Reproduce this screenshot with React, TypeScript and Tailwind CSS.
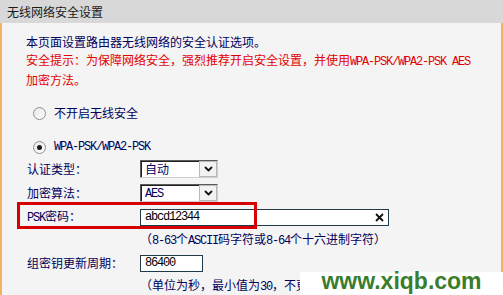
import type { ReactNode } from "react";

// Half-width latin in the router page's bitmap font: 6px advance
function M({ children }: { children: ReactNode }) {
  return <span className="font-['Liberation_Mono',monospace] tracking-[-1.2px]">{children}</span>;
}

function Radio({ checked }: { checked?: boolean }) {
  return (
    <span className="flex h-[13px] w-[13px] items-center justify-center rounded-full border border-[#8f8f8f] bg-gradient-to-br from-[#e6e6e6] to-white">
      {checked && <span className="h-[5px] w-[5px] rounded-full bg-[#1a1a1a]" />}
    </span>
  );
}

function Chevron() {
  return (
    <svg width="9" height="6" viewBox="0 0 9 6">
      <polyline points="1,1 4.5,4.5 8,1" fill="none" stroke="#111" strokeWidth="1.8" />
    </svg>
  );
}

function Select({ value }: { value: ReactNode }) {
  return (
    <div className="flex h-[18px] w-[78px] border border-t-[#5a5a5a] border-l-[#5a5a5a] border-b-[#cfcfcf] border-r-[#cfcfcf] bg-white">
      <div className="flex flex-1 items-center border-t border-l border-[#202020] pl-[3px] leading-none">{value}</div>
      <div className="flex w-[18px] items-center justify-center border border-[#b8b8b8] bg-[#f2f2f2]">
        <Chevron />
      </div>
    </div>
  );
}

function Row({ label, h, children }: { label?: ReactNode; h: string; children: ReactNode }) {
  return (
    <div className={`flex items-center ${h}`}>
      <div className="w-[114px] shrink-0 pl-[1px]">{label}</div>
      {children}
    </div>
  );
}

export default function App() {
  return (
    <div className="relative h-[295px] w-[503px] overflow-hidden bg-[#f4f4f4] font-['Noto_Sans_CJK_SC','Noto_Sans',sans-serif] text-[12px] text-[#00005c]">
      <div className="flex h-[23px] items-center bg-[#d8d8d8] pl-[7px] text-[#1a1a1a]">无线网络安全设置</div>

      <div className="h-[272px] border-x-2 border-[#f4b266] pl-[24px] pt-[10px]">
        <div className="leading-[18px]">
          <p>本页面设置路由器无线网络的安全认证选项。</p>
          <p className="whitespace-nowrap text-[#e40000]">
            安全提示：为保障网络安全，强烈推荐开启安全设置，并使用<M>WPA-PSK/WPA2-PSK AES</M>
            <br />
            加密方法。
          </p>
        </div>

        <div className="mt-[15px] flex h-[18px] items-center gap-[8px] pl-[7px]">
          <Radio />
          <span>不开启无线安全</span>
        </div>
        <div className="mt-[16px] flex h-[18px] items-center gap-[8px] pl-[7px]">
          <Radio checked />
          <M>WPA-PSK/WPA2-PSK</M>
        </div>

        <Row label="认证类型：" h="h-[25px]">
          <Select value="自动" />
        </Row>
        <Row label="加密算法：" h="h-[24px]">
          <Select value={<M>AES</M>} />
        </Row>
        <Row label={<><M>PSK</M>密码：</>} h="h-[24px]">
          <div className="flex h-[17px] w-[249px] items-center justify-between border border-[#1f3a48] bg-white pl-[4px] pr-[4px] text-black">
            <M>abcd12344</M>
            <svg width="9" height="9" viewBox="0 0 9 9">
              <path d="M1 1 L8 8 M8 1 L1 8" stroke="#111" strokeWidth="1.8" />
            </svg>
          </div>
        </Row>
        <Row h="h-[22px]">
          <span>
            （<M>8-63</M>个<M>ASCII</M>码字符或<M>8-64</M>个十六进制字符）
          </span>
        </Row>
        <Row label="组密钥更新周期：" h="h-[24px]">
          <div className="flex h-[17px] w-[63px] items-center border border-[#1f3a48] bg-white pl-[4px] text-black">
            <M>86400</M>
          </div>
        </Row>
        <Row h="h-[22px]">
          <span className="whitespace-nowrap">
            （单位为秒，最小值为<M>30</M>，不更
          </span>
        </Row>
      </div>

      {/* red annotation box round the PSK row */}
      <div className="absolute left-[17px] top-[202px] h-[27px] w-[240px] border-[3px] border-[#d60000]" />

      {/* site watermark */}
      <div className="absolute left-[300px] top-[272px] flex h-[23px] w-[203px] items-end justify-center bg-white pb-[2px] font-['Liberation_Sans',sans-serif] text-[23px] font-bold leading-none text-[#3a7d2c]">
        www.xiqb.com
      </div>
    </div>
  );
}
